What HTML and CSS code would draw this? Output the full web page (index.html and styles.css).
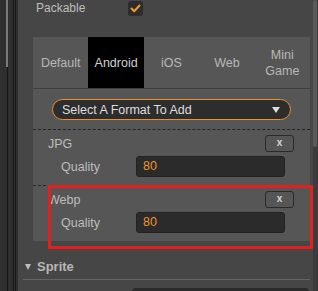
FILE: index.html
```html
<!DOCTYPE html>
<html lang="en">
<head>
  <meta charset="UTF-8" />
  <title>Texture Platform Settings</title>
  <link rel="stylesheet" href="styles.css">
</head>
<body>
  <div class="app">
    <div class="gutter">
      <div class="g-track"><div class="g-thumb"></div></div>
      <div class="g-line"></div>
      <div class="g-gap"></div>
      <div class="g-line"></div>
    </div>

    <div class="panel">
      <div class="prop-row">
        <span class="prop-label">Packable</span>
        <span class="check">
          <svg width="11" height="9" viewBox="0 0 11 9"><path d="M1.5 4.5 L4.2 7.2 L9.5 1.5" fill="none" stroke="#f29a2e" stroke-width="2" stroke-linecap="round" stroke-linejoin="round"/></svg>
        </span>
      </div>

      <div class="platforms">
        <div class="tabs">
          <div class="tab">Default</div>
          <div class="tab active">Android</div>
          <div class="tab">iOS</div>
          <div class="tab">Web</div>
          <div class="tab">Mini<br>Game</div>
        </div>
        <div class="tab-body">
          <div class="add-row">
            <div class="select">
              <span>Select A Format To Add</span>
              <span class="caret"></span>
            </div>
          </div>

          <div class="format">
            <div class="format-head">
              <span class="format-name">JPG</span>
              <button class="remove">x</button>
            </div>
            <div class="format-field">
              <span class="field-label">Quality</span>
              <div class="num-input">80</div>
            </div>
          </div>

          <div class="format">
            <div class="format-head">
              <span class="format-name">Webp</span>
              <button class="remove">x</button>
            </div>
            <div class="format-field">
              <span class="field-label">Quality</span>
              <div class="num-input">80</div>
            </div>
            <!-- highlight drawn over the screenshot -->
            <div class="highlight"></div>
          </div>
        </div>
      </div>

      <div class="section-head">
        <span class="fold"></span>
        <span>Sprite</span>
      </div>
      <div class="next-field"></div>
    </div>

    <div class="scrollbar"><div class="thumb"></div></div>
  </div>
</body>
</html>
```

FILE: styles.css
```css
:root {
  --panel: #464646;
  --box: #565656;
  --field: #2b2b2b;
  --text: #bdbdbd;
  --orange: #f0932b;
}
html, body {
  margin: 0;
  height: 100%;
  overflow: hidden;
}
body {
  background: var(--panel);
  font-family: 'Liberation Sans', Arial, sans-serif;
  font-size: 12.5px;
  color: var(--text);
}
.app {
  display: flex;
  height: 291px;
}

/* left gutter with thin scroll lines */
.gutter {
  width: 18px;
  display: flex;
  background: #2f2f2f;
}
.g-track {
  width: 2px;
  margin-left: 6px;
  margin-right: 5px;
  display: flex;
  flex-direction: column;
  align-items: center;
}
.g-thumb {
  width: 2px;
  height: 67px;
  background: #7a7a7a;
}
.g-track::after {
  content: "";
  flex: 1;
  width: 1px;
  background: #161616;
}
.g-line {
  width: 1px;
  background: #161616;
}
.g-gap {
  width: 1px;
  background: #343434;
}

.panel {
  flex: 1;
  position: relative;
}
.prop-row {
  display: flex;
  align-items: center;
  height: 17px;
  padding-left: 18px;
  margin-bottom: 20px;
}
.prop-label {
  width: 92px;
  font-size: 12px;
  margin-top: -2px;
}
.check {
  width: 15px;
  height: 15px;
  background: #2c2c2c;
  border-radius: 3px;
  display: flex;
  align-items: center;
  justify-content: center;
}

.platforms {
  margin-left: 15px;
  margin-right: 3px;
  background: var(--box);
}
.tabs {
  display: flex;
  height: 51px;
}
.tab {
  flex: 1;
  display: flex;
  align-items: center;
  justify-content: center;
  text-align: center;
  line-height: 16px;
  color: #b8b8b8;
  margin-top: 1px;
}
.tab.active {
  background: #000;
  color: #d0d0d0;
  margin-top: 0;
}
.tab-body {
  border-top: 1px solid #3e3e3e;
}
.add-row {
  padding: 10px 19px 9px;
  border-bottom: 1px dashed #262626;
}
.select {
  height: 21px;
  box-sizing: border-box;
  border: 1px solid #e8902c;
  border-radius: 11px;
  background: #2d2d2d;
  color: #dedede;
  display: flex;
  align-items: center;
  justify-content: space-between;
  padding: 0 10px 0 9px;
}
.caret {
  width: 0;
  height: 0;
  border-left: 4px solid transparent;
  border-right: 4px solid transparent;
  border-top: 6px solid #dedede;
}

.format {
  position: relative;
  padding: 5px 0 8px;
}
.format + .format {
  border-top: 1px dashed #262626;
}
.format-head {
  display: flex;
  align-items: center;
  justify-content: space-between;
  height: 17px;
  padding-left: 15px;
  padding-right: 16px;
}
.remove {
  width: 29px;
  height: 17px;
  box-sizing: border-box;
  border: 1px solid #2a2a2a;
  border-radius: 3px;
  background: var(--box);
  color: #d8d8d8;
  font-family: inherit;
  font-size: 10px;
  font-weight: bold;
  padding: 0 0 2px;
}
.format-field {
  display: flex;
  align-items: center;
  margin-top: 4px;
  padding-left: 28px;
  padding-right: 25px;
}
.field-label {
  flex: 1;
}
.num-input {
  width: 149px;
  height: 21px;
  box-sizing: border-box;
  background: var(--field);
  border: 1px solid #222;
  border-radius: 3px;
  color: var(--orange);
  padding-left: 6px;
  line-height: 19px;
}
.highlight {
  position: absolute;
  left: 15px;
  top: -1px;
  right: -3px;
  bottom: -8px;
  border: 3px solid #e3201d;
}

.section-head {
  display: flex;
  align-items: center;
  gap: 6px;
  height: 25px;
  margin: 13px 3px 0 5px;
  padding-left: 2px;
  border-bottom: 1px solid #646464;
  font-size: 13px;
  font-weight: bold;
  color: #b8b8b8;
}
.fold {
  width: 0;
  height: 0;
  border-left: 3px solid transparent;
  border-right: 3px solid transparent;
  border-top: 6px solid #bdbdbd;
}
.next-field {
  margin: 8px 4px 0 114px;
  height: 20px;
  background: var(--field);
  border-radius: 4px;
}

.scrollbar {
  width: 5px;
  background: #3b3b3b;
}
.thumb {
  width: 4px;
  height: 147px;
  background: #5a5a5a;
  border-radius: 2px;
}
```
